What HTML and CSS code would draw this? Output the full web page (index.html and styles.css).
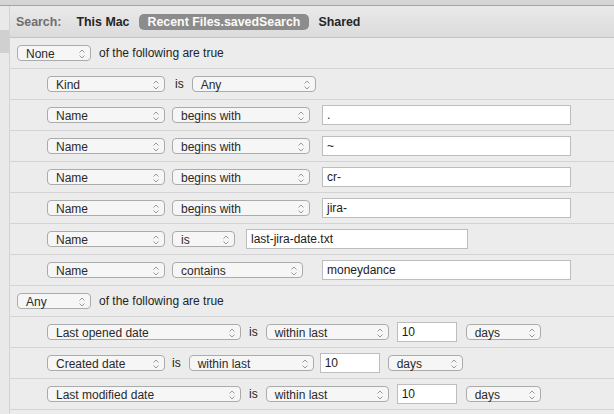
FILE: index.html
```html
<!DOCTYPE html>
<html>
<head>
<meta charset="utf-8">
<link rel="stylesheet" href="styles.css">
</head>
<body>
<div class="window">
  <div class="toolbar-edge"></div>
  <div class="main">
    <div class="sidebar"><div class="sidebar-sel"></div></div>
    <div class="content">
      <div class="scopebar">
        <span class="scope-label">Search:</span>
        <span class="scope">This Mac</span>
        <span class="scope active">Recent Files.savedSearch</span>
        <span class="scope">Shared</span>
      </div>

      <div class="row">
        <div class="popup w74"><span>None</span><svg class="chev" viewBox="0 0 8 12"><path d="M1.5 4.5L4 2l2.5 2.5M1.5 7.5L4 10l2.5-2.5"/></svg></div>
        <span class="label">of the following are true</span>
      </div>

      <div class="row sub">
        <div class="popup w118"><span>Kind</span><svg class="chev" viewBox="0 0 8 12"><path d="M1.5 4.5L4 2l2.5 2.5M1.5 7.5L4 10l2.5-2.5"/></svg></div>
        <span class="label is-a">is</span>
        <div class="popup w124"><span>Any</span><svg class="chev" viewBox="0 0 8 12"><path d="M1.5 4.5L4 2l2.5 2.5M1.5 7.5L4 10l2.5-2.5"/></svg></div>
      </div>

      <div class="row sub">
        <div class="popup w118"><span>Name</span><svg class="chev" viewBox="0 0 8 12"><path d="M1.5 4.5L4 2l2.5 2.5M1.5 7.5L4 10l2.5-2.5"/></svg></div>
        <div class="popup w138 op"><span>begins with</span><svg class="chev" viewBox="0 0 8 12"><path d="M1.5 4.5L4 2l2.5 2.5M1.5 7.5L4 10l2.5-2.5"/></svg></div>
        <div class="field f-long m12">.</div>
      </div>

      <div class="row sub">
        <div class="popup w118"><span>Name</span><svg class="chev" viewBox="0 0 8 12"><path d="M1.5 4.5L4 2l2.5 2.5M1.5 7.5L4 10l2.5-2.5"/></svg></div>
        <div class="popup w138 op"><span>begins with</span><svg class="chev" viewBox="0 0 8 12"><path d="M1.5 4.5L4 2l2.5 2.5M1.5 7.5L4 10l2.5-2.5"/></svg></div>
        <div class="field f-long m12">~</div>
      </div>

      <div class="row sub">
        <div class="popup w118"><span>Name</span><svg class="chev" viewBox="0 0 8 12"><path d="M1.5 4.5L4 2l2.5 2.5M1.5 7.5L4 10l2.5-2.5"/></svg></div>
        <div class="popup w138 op"><span>begins with</span><svg class="chev" viewBox="0 0 8 12"><path d="M1.5 4.5L4 2l2.5 2.5M1.5 7.5L4 10l2.5-2.5"/></svg></div>
        <div class="field f-long m12">cr-</div>
      </div>

      <div class="row sub">
        <div class="popup w118"><span>Name</span><svg class="chev" viewBox="0 0 8 12"><path d="M1.5 4.5L4 2l2.5 2.5M1.5 7.5L4 10l2.5-2.5"/></svg></div>
        <div class="popup w138 op"><span>begins with</span><svg class="chev" viewBox="0 0 8 12"><path d="M1.5 4.5L4 2l2.5 2.5M1.5 7.5L4 10l2.5-2.5"/></svg></div>
        <div class="field f-long m12">jira-</div>
      </div>

      <div class="row sub">
        <div class="popup w118"><span>Name</span><svg class="chev" viewBox="0 0 8 12"><path d="M1.5 4.5L4 2l2.5 2.5M1.5 7.5L4 10l2.5-2.5"/></svg></div>
        <div class="popup w63 op"><span>is</span><svg class="chev" viewBox="0 0 8 12"><path d="M1.5 4.5L4 2l2.5 2.5M1.5 7.5L4 10l2.5-2.5"/></svg></div>
        <div class="field f-mid m11">last-jira-date.txt</div>
      </div>

      <div class="row sub">
        <div class="popup w118"><span>Name</span><svg class="chev" viewBox="0 0 8 12"><path d="M1.5 4.5L4 2l2.5 2.5M1.5 7.5L4 10l2.5-2.5"/></svg></div>
        <div class="popup w131 op"><span>contains</span><svg class="chev" viewBox="0 0 8 12"><path d="M1.5 4.5L4 2l2.5 2.5M1.5 7.5L4 10l2.5-2.5"/></svg></div>
        <div class="field f-long m19">moneydance</div>
      </div>

      <div class="row">
        <div class="popup w74"><span>Any</span><svg class="chev" viewBox="0 0 8 12"><path d="M1.5 4.5L4 2l2.5 2.5M1.5 7.5L4 10l2.5-2.5"/></svg></div>
        <span class="label">of the following are true</span>
      </div>

      <div class="row sub">
        <div class="popup w194"><span>Last opened date</span><svg class="chev" viewBox="0 0 8 12"><path d="M1.5 4.5L4 2l2.5 2.5M1.5 7.5L4 10l2.5-2.5"/></svg></div>
        <span class="label is-b">is</span>
        <div class="popup w123"><span>within last</span><svg class="chev" viewBox="0 0 8 12"><path d="M1.5 4.5L4 2l2.5 2.5M1.5 7.5L4 10l2.5-2.5"/></svg></div>
        <div class="field f-num m8">10</div>
        <div class="popup w75 m9"><span>days</span><svg class="chev" viewBox="0 0 8 12"><path d="M1.5 4.5L4 2l2.5 2.5M1.5 7.5L4 10l2.5-2.5"/></svg></div>
      </div>

      <div class="row sub">
        <div class="popup w118"><span>Created date</span><svg class="chev" viewBox="0 0 8 12"><path d="M1.5 4.5L4 2l2.5 2.5M1.5 7.5L4 10l2.5-2.5"/></svg></div>
        <span class="label is-c">is</span>
        <div class="popup w125"><span>within last</span><svg class="chev" viewBox="0 0 8 12"><path d="M1.5 4.5L4 2l2.5 2.5M1.5 7.5L4 10l2.5-2.5"/></svg></div>
        <div class="field f-num m6">10</div>
        <div class="popup w75 m8"><span>days</span><svg class="chev" viewBox="0 0 8 12"><path d="M1.5 4.5L4 2l2.5 2.5M1.5 7.5L4 10l2.5-2.5"/></svg></div>
      </div>

      <div class="row sub">
        <div class="popup w194"><span>Last modified date</span><svg class="chev" viewBox="0 0 8 12"><path d="M1.5 4.5L4 2l2.5 2.5M1.5 7.5L4 10l2.5-2.5"/></svg></div>
        <span class="label is-b">is</span>
        <div class="popup w123"><span>within last</span><svg class="chev" viewBox="0 0 8 12"><path d="M1.5 4.5L4 2l2.5 2.5M1.5 7.5L4 10l2.5-2.5"/></svg></div>
        <div class="field f-num m8">10</div>
        <div class="popup w75 m9"><span>days</span><svg class="chev" viewBox="0 0 8 12"><path d="M1.5 4.5L4 2l2.5 2.5M1.5 7.5L4 10l2.5-2.5"/></svg></div>
      </div>

      <div class="row last"></div>
    </div>
  </div>
</div>
</body>
</html>
```

FILE: styles.css
```css
* { box-sizing: border-box; }
html, body {
  margin: 0;
  padding: 0;
}
body {
  width: 614px;
  height: 414px;
  overflow: hidden;
  background: #ececec;
  font-family: "Liberation Sans", Arial, sans-serif;
  font-size: 12px;
  color: #242424;
}
.window {
  display: flex;
  flex-direction: column;
  height: 414px;
  overflow: hidden;
}
.toolbar-edge {
  height: 6px;
  background: #d5d5d5;
  border-bottom: 1px solid #a4a4a4;
  flex: none;
}
.main {
  display: flex;
  flex: 1;
  min-height: 0;
}
.sidebar {
  width: 10px;
  flex: none;
  background: #e9e9e9;
  border-right: 1px solid #d2d2d2;
  padding-top: 24px;
}
.sidebar-sel {
  height: 23px;
  background: #d0d0d0;
}
.content {
  flex: 1;
  display: flex;
  flex-direction: column;
  min-width: 0;
}
.scopebar {
  height: 32px;
  flex: none;
  display: flex;
  align-items: center;
  padding-left: 6px;
  background: linear-gradient(#eaeaea, #dbdbdb);
  border-bottom: 1px solid #c4c4c4;
  font-weight: bold;
  font-size: 12.4px;
}
.scope-label {
  color: #6e6e6e;
  margin-right: 15px;
}
.scope {
  color: #262626;
  margin-right: 9px;
}
.scope.active {
  background: #8c8c8c;
  color: #fbfbfb;
  border-radius: 5px;
  height: 16px;
  line-height: 16px;
  padding: 0 9px;
  margin-right: 9px;
}
.row {
  height: 31px;
  flex: none;
  display: flex;
  align-items: center;
  padding-left: 7px;
  border-bottom: 1px solid #d3d3d3;
}
.row.sub {
  padding-left: 37px;
}
.row.last {
  height: 8px;
  border-bottom: none;
}
.popup {
  height: 16px;
  display: flex;
  align-items: center;
  justify-content: space-between;
  padding: 1px 4px 0 8px;
  border: 1px solid #ababab;
  border-radius: 4px;
  background: #f6f6f6;
  font-size: 12px;
  line-height: 14px;
  color: #2a2a2a;
  flex: none;
}
.chev {
  width: 8px;
  height: 12px;
  fill: none;
  stroke: #9a9a9a;
  stroke-width: 1;
}
.popup.op { margin-left: 7px; }
.label {
  margin-left: 8px;
  font-size: 12px;
}
.label.is-a { margin-left: 10px; margin-right: 8px; }
.label.is-b { margin-left: 8px; margin-right: 8px; }
.label.is-c { margin-left: 7px; margin-right: 8px; }
.field {
  height: 20px;
  line-height: 19px;
  background: #ffffff;
  border: 1px solid #bdbdbd;
  padding-left: 4px;
  font-size: 12px;
  color: #1c1c1c;
  flex: none;
}
.f-long { width: 249px; }
.f-mid { width: 222px; }
.f-num { width: 60px; }
.m6 { margin-left: 6px; }
.m8 { margin-left: 8px; }
.m9 { margin-left: 9px; }
.m11 { margin-left: 11px; }
.m12 { margin-left: 12px; }
.m19 { margin-left: 19px; }
.w63 { width: 63px; }
.w74 { width: 74px; }
.w75 { width: 75px; }
.w118 { width: 118px; }
.w123 { width: 123px; }
.w124 { width: 124px; }
.w125 { width: 125px; }
.w131 { width: 131px; }
.w138 { width: 138px; }
.w194 { width: 194px; }
```
